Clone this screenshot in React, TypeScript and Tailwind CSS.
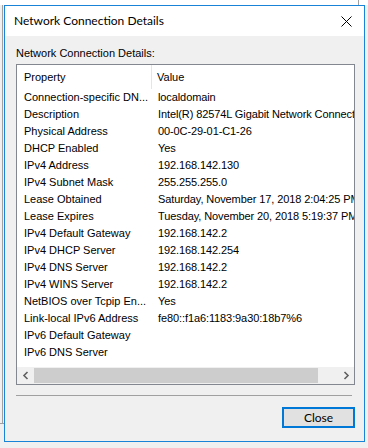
import React from "react";

const rows: [string, string][] = [
  ["Connection-specific DN...", "localdomain"],
  ["Description", "Intel(R) 82574L Gigabit Network Connection"],
  ["Physical Address", "00-0C-29-01-C1-26"],
  ["DHCP Enabled", "Yes"],
  ["IPv4 Address", "192.168.142.130"],
  ["IPv4 Subnet Mask", "255.255.255.0"],
  ["Lease Obtained", "Saturday, November 17, 2018 2:04:25 PM"],
  ["Lease Expires", "Tuesday, November 20, 2018 5:19:37 PM"],
  ["IPv4 Default Gateway", "192.168.142.2"],
  ["IPv4 DHCP Server", "192.168.142.254"],
  ["IPv4 DNS Server", "192.168.142.2"],
  ["IPv4 WINS Server", "192.168.142.2"],
  ["NetBIOS over Tcpip En...", "Yes"],
  ["Link-local IPv6 Address", "fe80::f1a6:1183:9a30:18b7%6"],
  ["IPv6 Default Gateway", ""],
  ["IPv6 DNS Server", ""],
];

const sans = { fontFamily: '"Liberation Sans", Arial, sans-serif' };
const ui = { fontFamily: 'Lato, "Noto Sans", sans-serif' };

const Chevron = ({ dir }: { dir: "left" | "right" }) => (
  <svg width="8" height="9" viewBox="0 0 8 9">
    <path
      d={dir === "left" ? "M5.5 1 L2 4.5 L5.5 8" : "M2.5 1 L6 4.5 L2.5 8"}
      fill="none"
      stroke="#606060"
      strokeWidth="1.6"
    />
  </svg>
);

export default function App() {
  return (
    <div className="relative h-[448px] w-[368px] overflow-hidden bg-[linear-gradient(to_bottom,#ffffff_5px,#f0f0f0_5px)] pt-[5px] pl-[4px]">
      {/* edges of the window behind */}
      <div className="absolute left-[2px] top-[5px] h-[418px] w-px bg-[#a0a0a0]" />
      <div className="absolute left-0 top-[423px] h-px w-[4px] bg-[#a0a0a0]" />
      <div className="absolute left-[358px] top-0 h-[5px] w-px bg-[#a0a0a0]" />

      <div className="relative flex h-[437px] w-[361px] flex-col border border-[#1883d7] bg-[#f0f0f0]">
        {/* title bar */}
        <div className="flex h-[30px] items-center justify-between bg-white pl-[9px] pr-[9px]">
          <span className="text-[12px] text-black" style={ui}>
            Network Connection Details
          </span>
          <svg width="11" height="11" viewBox="0 0 11 11" className="mr-[3px]">
            <path d="M0.5 0.5 L10.5 10.5 M10.5 0.5 L0.5 10.5" stroke="#000" strokeWidth="1" />
          </svg>
        </div>

        {/* body */}
        <div className="flex flex-1 flex-col pl-[11px] pr-[9px] pt-[11px]" style={sans}>
          <div className="h-[13px] text-[11px] leading-[13px] text-black">
            Network Connection Details:
          </div>

          <div className="mt-[4px] flex h-[321px] flex-col overflow-hidden border border-[#828790] bg-white">
            <div className="flex h-[24px] shrink-0 items-center text-[11px] text-black">
              <div className="flex h-full w-[135px] items-center border-r border-[#e5e5e5] pl-[7px]">
                Property
              </div>
              <div className="pl-[5px]">Value</div>
            </div>
            <div className="flex-1">
              {rows.map(([k, v]) => (
                <div key={k} className="flex h-[17px] items-center whitespace-nowrap text-[11px] text-black">
                  <div className="w-[136px] shrink-0 overflow-hidden pl-[7px]">{k}</div>
                  <div className="overflow-hidden pl-[5px] tracking-[-0.1px]">{v}</div>
                </div>
              ))}
            </div>
            <div className="flex h-[17px] shrink-0 bg-[#f0f0f0]">
              <div className="flex w-[17px] items-center justify-center">
                <Chevron dir="left" />
              </div>
              <div className="my-[1px] w-[284px] bg-[#cdcdcd]" />
              <div className="flex-1" />
              <div className="flex w-[17px] items-center justify-center">
                <Chevron dir="right" />
              </div>
            </div>
          </div>

          <div className="mt-[10px] h-[2px] w-[336px] border-t border-[#a0a0a0] border-b-white" />

          <div className="mt-[10px] flex justify-end">
            <button className="flex h-[21px] w-[73px] items-center justify-center border-2 border-[#0078d7] bg-[#e1e1e1] text-[12px] text-black" style={ui}>
              Close
            </button>
          </div>
        </div>
      </div>
    </div>
  );
}
